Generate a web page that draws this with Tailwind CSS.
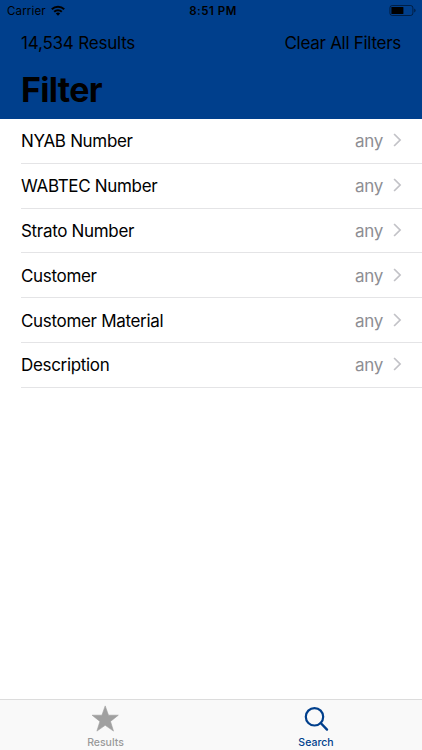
<!DOCTYPE html>
<html lang="en">
<head>
<meta charset="utf-8">
<title>Filter</title>
<script src="https://cdn.jsdelivr.net/npm/@tailwindcss/browser@4"></script>
</head>
<body class="bg-white">
<div class="flex h-[750px] w-[422px] flex-col overflow-hidden bg-white font-['Inter','Liberation_Sans',sans-serif] text-black">
  <header class="h-[118.5px] shrink-0 bg-[#003f8c]">
    <div class="grid h-[22px] grid-cols-3 items-center pr-[6px] pl-[7px] text-[11.5px] leading-[22px]">
      <div class="flex items-center gap-[5px]">
        <span class="tracking-[0.15px]">Carrier</span>
        <svg class="mb-[1px] h-[11px] w-[14px]" viewBox="0 0 14 11" fill="none" stroke="#000" stroke-width="2">
          <path d="M.8 4.3a8.9 8.9 0 0 1 12.4 0M3.2 6.8a5.4 5.4 0 0 1 7.6 0"/>
          <path d="M7 10.8 4.8 8.5a3.1 3.1 0 0 1 4.4 0z" fill="#000" stroke="none"/>
        </svg>
      </div>
      <span class="pl-[3px] text-center font-semibold tracking-[0.5px]">8:51 PM</span>
      <svg class="h-[12px] w-[27px] justify-self-end" viewBox="0 0 27 12">
        <rect x=".9" y=".5" width="23" height="10" rx="2.4" fill="none" stroke="#000" stroke-opacity=".5"/>
        <rect x="2.4" y="2" width="12" height="7" rx=".5"/>
        <path d="M25.2 3.6v4q1.4-.6 1.4-2t-1.4-2z" fill-opacity=".5"/>
      </svg>
    </div>
    <div class="flex h-[43px] items-center justify-between px-[21px] text-[17px]">
      <span class="tracking-[-0.2px]">14,534 Results</span>
      <span class="tracking-[-0.28px]">Clear All Filters</span>
    </div>
    <h1 class="pl-[21px] text-[34px] leading-[49px] font-bold tracking-[-0.7px]">Filter</h1>
  </header>

  <main class="flex-1 pt-[0.5px] pl-[21px] text-[17px] tracking-[-0.32px]">
    <ul id="filters"></ul>
  </main>

  <nav class="grid h-[51px] shrink-0 grid-cols-2 border-t border-[#dcdcdc] bg-[#f9f9f9] text-[10.5px] leading-[12px] font-medium">
    <a class="flex flex-col items-center pt-[5px] text-[#999]">
      <svg class="mr-[1px] h-[28px] w-[28px]" viewBox="0 0 28 28" fill="#a0a0a0" stroke="#a0a0a0" stroke-width=".6" stroke-linejoin="round"><path d="M14.2.9l3.3 9.3h9.8l-7.8 6.2 3 9.7-8.3-5.8-8.3 5.8 3-9.7-7.8-6.2h9.8z"/></svg>
      <span class="mt-[4px]">Results</span>
    </a>
    <a class="flex flex-col items-center pt-[5px] text-[#003f8c]">
      <svg class="mr-[2px] h-[28px] w-[28px]" viewBox="0 0 28 28" fill="none" stroke="currentColor"><circle cx="12.5" cy="11.8" r="8.7" stroke-width="2.2"/><path d="M18.7 18l6.3 6.6" stroke-width="2.4" stroke-linecap="round"/></svg>
      <span class="mt-[4px] mr-[1px]">Search</span>
    </a>
  </nav>
</div>
<script>
  const filters = ["NYAB Number", "WABTEC Number", "Strato Number", "Customer", "Customer Material", "Description"];
  document.getElementById("filters").innerHTML = filters.map(name => `
    <li class="flex h-[44.8px] items-center border-b border-[#e4e4e6] pr-[20px]">
      <span class="flex-1 pt-[2.6px]">${name}</span>
      <span class="pt-[2.6px] text-[#8e8e93]">any</span>
      <svg class="mb-[1px] ml-[10px] h-[14px] w-[9px]" viewBox="0 0 9 14" fill="none" stroke="#c2c2c7" stroke-width="1.7"><path d="M1.1 1l6 6-6 6"/></svg>
    </li>`).join("");
</script>
</body>
</html>
